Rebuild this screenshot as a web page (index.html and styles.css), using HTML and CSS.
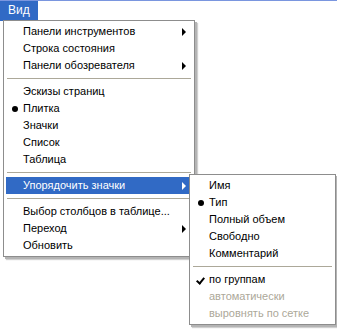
FILE: index.html
```html
<!DOCTYPE html>
<html>

<head>
    <meta charset="UTF-8">
    <title>Вид</title>
    <link rel="stylesheet" href="styles.css">
</head>

<body>
<div class="menubar">
    <div class="menubar-item active">Вид</div>
</div>

<div class="menu main-menu">
    <div class="item has-sub">Панели инструментов</div>
    <div class="item">Строка состояния</div>
    <div class="item has-sub">Панели обозревателя</div>
    <div class="sep"></div>
    <div class="item">Эскизы страниц</div>
    <div class="item radio">Плитка</div>
    <div class="item">Значки</div>
    <div class="item">Список</div>
    <div class="item">Таблица</div>
    <div class="sep"></div>
    <div class="item has-sub hover">Упорядочить значки</div>
    <div class="sep"></div>
    <div class="item">Выбор столбцов в таблице...</div>
    <div class="item has-sub">Переход</div>
    <div class="item">Обновить</div>
</div>

<div class="menu sub-menu">
    <div class="item">Имя</div>
    <div class="item radio">Тип</div>
    <div class="item">Полный объем</div>
    <div class="item">Свободно</div>
    <div class="item">Комментарий</div>
    <div class="sep"></div>
    <div class="item check">по группам</div>
    <div class="item disabled">автоматически</div>
    <div class="item disabled">выровнять по сетке</div>
</div>
</body>
</html>
```

FILE: styles.css
```css
body {
    margin: 0;
    width: 337px;
    height: 331px;
    background-color: #fff;
    font-family: "Liberation Sans", Arial, sans-serif;
    font-size: 11px;
    color: #000;
    position: relative;
    overflow: hidden;
}

.menubar {
    display: flex;
    height: 20px;
    border-top: 1px solid #7a96df;
}

.menubar-item {
    padding: 0 8px;
    line-height: 19px;
    font-size: 12px;
}

.menubar-item.active {
    background-color: #316ac5;
    color: #fff;
}

.menu {
    position: absolute;
    background-color: #fff;
    border: 1px solid #8d8d8d;
    padding: 2px 2px 2px 2px;
    box-shadow: 2px 2px 0 #b4b4b4, 3px 3px 1px #d0d0d0;
}

.main-menu {
    left: 3px;
    top: 20px;
    width: 186px;
}

.sub-menu {
    left: 189px;
    top: 174px;
    width: 141px;
}

.item {
    position: relative;
    height: 17px;
    line-height: 17px;
    padding-left: 17px;
    white-space: nowrap;
}

.item.hover {
    background-color: #316ac5;
    color: #fff;
}

.item.has-sub::after {
    content: "";
    position: absolute;
    right: 6px;
    top: 5px;
    border-left: 4px solid #000;
    border-top: 4px solid transparent;
    border-bottom: 4px solid transparent;
}

.item.hover.has-sub::after {
    border-left-color: #fff;
}

.item.radio::before {
    content: "";
    position: absolute;
    left: 6px;
    top: 6px;
    width: 6px;
    height: 6px;
    border-radius: 50%;
    background-color: #000;
}

.item.check::before {
    content: "";
    position: absolute;
    left: 6px;
    top: 5px;
    width: 3px;
    height: 6px;
    border-right: 2px solid #000;
    border-bottom: 2px solid #000;
    transform: rotate(40deg);
}

.item.disabled {
    color: #aca899;
}

.sep {
    height: 1px;
    margin: 4px 1px 4px 1px;
    background-color: #aca899;
}
```
